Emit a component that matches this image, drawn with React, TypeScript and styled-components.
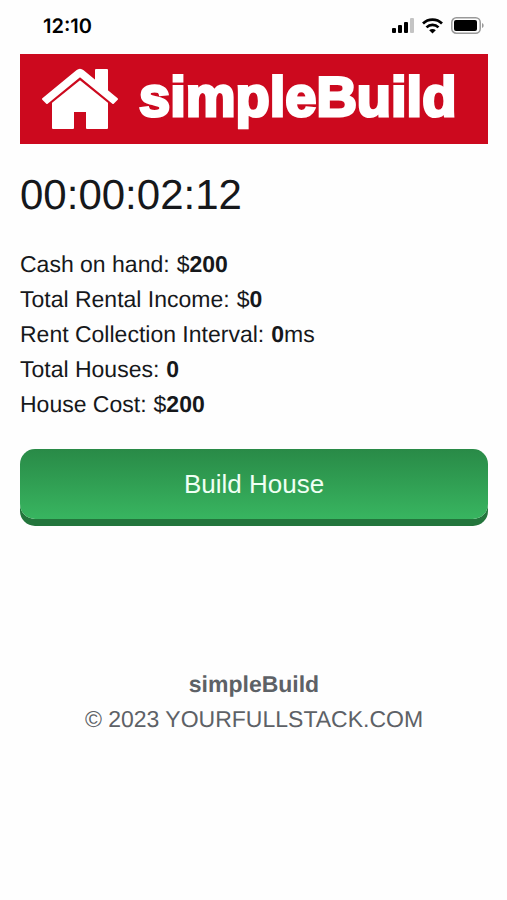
import React, { useState } from "react";
import styled, { createGlobalStyle } from "styled-components";

const GlobalStyle = createGlobalStyle`
  * { box-sizing: border-box; }
  body {
    margin: 0;
    background: #fefefe;
    color: #16181b;
    font-family: "Liberation Sans", Arial, sans-serif;
    font-size: 23px;
    line-height: 35px;
    text-rendering: geometricPrecision;
  }
`;

const StatusBar = styled.div`
  display: flex;
  align-items: center;
  justify-content: space-between;
  height: 54px;
  padding: 0 23px 2px 43px;
  color: #000;
`;

const Clock = styled.time`
  font-family: Inter, sans-serif;
  font-size: 20px;
  font-weight: 600;
  line-height: 24px;
`;

const StatusIcons = styled.div`
  display: flex;
  align-items: center;
  gap: 8px;

  svg { display: block; }
`;

const Page = styled.div`
  padding: 0 19px 0 20px;
`;

const Banner = styled.header`
  display: flex;
  align-items: center;
  gap: 19px;
  height: 90px;
  padding: 0 20px;
  background: #cc091e;
  color: #fff;

  svg { display: block; flex: none; }
`;

const BrandName = styled.span`
  padding-bottom: 4px;
  font-size: 56px;
  font-weight: 700;
  line-height: 64px;
  -webkit-text-stroke: 3px #fff;
`;

const Timer = styled.h1`
  margin: 25px 0 27px;
  font-size: 42px;
  font-weight: 400;
  line-height: 51px;
`;

const Stats = styled.dl`
  margin: 0 0 27px;
`;

const Stat = styled.div`
  display: flex;
  gap: 7px;
`;

const StatLabel = styled.dt``;

const StatValue = styled.dd`
  margin: 0;
`;

const BuildButton = styled.button`
  display: block;
  width: 100%;
  height: 70px;
  padding: 0;
  border: 0;
  border-radius: 15px;
  background: linear-gradient(#298a47, #38b560);
  box-shadow: 0 7px 0 #23753c;
  color: #effff3;
  font-family: inherit;
  font-size: 26px;
  line-height: 35px;
  cursor: pointer;
`;

const Footer = styled.footer`
  margin-top: 148px;
  color: #5d6166;
  text-align: center;
`;

const FooterLine = styled.div``;

function HouseIcon() {
  return (
    <svg width="80" height="64" viewBox="0 0 80 64" fill="#fff" stroke="#fff" strokeWidth="2" strokeLinejoin="round" aria-hidden="true">
      <path d="M56 20V3h11v26z" />
      <path d="M13 33L40 11l27 22v28H47V44H33v17H13z" />
      <path d="M6.500 37L40 10l33.500 27" fill="none" stroke="#cc091e" strokeWidth="5" strokeLinejoin="miter" />
      <path d="M3 32L37 4q3-2.500 6 0l34 28-4 4L40 9 7 36z" />
    </svg>
  );
}

function SignalIcon() {
  return (
    <svg width="22" height="16" viewBox="0 0 22 16" aria-hidden="true">
      <rect x="0" y="10" width="4" height="5" rx="1" />
      <rect x="6" y="7" width="4" height="8" rx="1" />
      <rect x="12" y="4" width="4" height="11" rx="1" />
      <rect x="18" y="0" width="4" height="15" rx="1" fill="#c4c4c4" />
    </svg>
  );
}

function WifiIcon() {
  return (
    <svg width="21" height="16" viewBox="0 0 21 16" fill="none" stroke="#000" strokeWidth="2.700" aria-hidden="true">
      <path d="M1 5.500a13.600 13.600 0 0 1 19 0" />
      <path d="M4.500 9.400a8.600 8.600 0 0 1 12 0" />
      <path d="M7.200 12.300a4.700 4.700 0 0 1 6.600 0L10.500 15.600z" fill="#000" stroke="none" />
    </svg>
  );
}

function BatteryIcon() {
  return (
    <svg width="33" height="18" viewBox="0 0 33 18" aria-hidden="true">
      <rect x="0.800" y="0.800" width="28.400" height="15.400" rx="4.500" fill="none" stroke="#999" strokeWidth="1.500" />
      <rect x="3" y="3" width="23" height="11" rx="2" />
      <path d="M31 6c2.200 1 2.200 4 0 5z" fill="#999" />
    </svg>
  );
}

export default function App() {
  const [cash, setCash] = useState(200);
  const [houses, setHouses] = useState(0);
  const cost = 200;

  const build = () => {
    if (cash < cost) return;
    setCash(cash - cost);
    setHouses(houses + 1);
  };

  return (
    <>
      <GlobalStyle />
      <StatusBar>
        <Clock>12:10</Clock>
        <StatusIcons>
          <SignalIcon />
          <WifiIcon />
          <BatteryIcon />
        </StatusIcons>
      </StatusBar>
      <Page>
        <Banner>
          <HouseIcon />
          <BrandName>simpleBuild</BrandName>
        </Banner>
        <main>
          <Timer>00:00:02:12</Timer>
          <Stats>
            <Stat>
              <StatLabel>Cash on hand:</StatLabel>
              <StatValue>$<b>{cash}</b></StatValue>
            </Stat>
            <Stat>
              <StatLabel>Total Rental Income:</StatLabel>
              <StatValue>$<b>0</b></StatValue>
            </Stat>
            <Stat>
              <StatLabel>Rent Collection Interval:</StatLabel>
              <StatValue><b>0</b>ms</StatValue>
            </Stat>
            <Stat>
              <StatLabel>Total Houses:</StatLabel>
              <StatValue><b>{houses}</b></StatValue>
            </Stat>
            <Stat>
              <StatLabel>House Cost:</StatLabel>
              <StatValue>$<b>{cost}</b></StatValue>
            </Stat>
          </Stats>
          <BuildButton type="button" onClick={build}>Build House</BuildButton>
        </main>
        <Footer>
          <FooterLine><b>simpleBuild</b></FooterLine>
          <FooterLine>© 2023 YOURFULLSTACK.COM</FooterLine>
        </Footer>
      </Page>
    </>
  );
}
